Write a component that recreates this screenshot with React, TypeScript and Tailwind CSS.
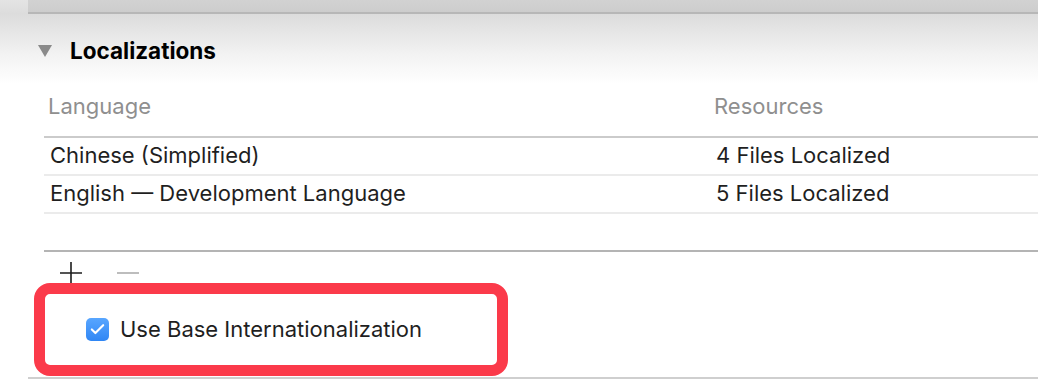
import { Check } from "lucide-react"

const ROWS = [
  { language: "Chinese (Simplified)", resources: "4 Files Localized" },
  { language: "English — Development Language", resources: "5 Files Localized" }
]

export default function App() {
  return (
    <div className="relative h-[386px] w-[1038px] overflow-hidden bg-white font-['Inter',sans-serif] text-[#1f1f1f]">
      {/* top shadow band */}
      <div className="flex h-[14px]">
        <div className="w-[28px] bg-gradient-to-b from-[#e4e4e4] to-[#dcdcdc]" />
        <div className="flex flex-1 flex-col">
          <div className="flex-1 bg-gradient-to-b from-[#d2d2d2] to-[#cdcdcd]" />
          <div className="h-[2px] bg-[#b7b7b7]" />
        </div>
      </div>

      <div className="flex h-[74px] items-center bg-[linear-gradient(to_bottom,#dcdcdc,#f2f2f2_40px,#ffffff_70px)] pl-[38px]">
        <svg width="14" height="12" viewBox="0 0 14 12" className="shrink-0">
          <polygon points="0,0 14,0 7,12" fill="#8a8a8a" />
        </svg>
        <span className="ml-[18px] text-[22.5px] font-bold leading-none text-black">
          Localizations
        </span>
      </div>

      <div className="ml-[44px]">
        <div className="flex h-[50px] border-b-2 border-[#cbcbcb] pt-[6px] text-[22px] leading-[24px] text-[#8f8f8f]">
          <div className="w-[670px] pl-[4px]">Language</div>
          <div>Resources</div>
        </div>
        {ROWS.map((row) => (
          <div
            key={row.language}
            className="flex h-[38px] items-center border-b-2 border-[#ebebeb] pb-[2px] text-[22px] leading-none"
          >
            <div className="w-[672px] pl-[6px]">{row.language}</div>
            <div>{row.resources}</div>
          </div>
        ))}
        <div className="mt-[36px] h-[2px] bg-[#b4b4b4]" />
      </div>

      <div className="flex h-[31px] items-center pl-[60px] pt-[10px]">
        <svg width="22" height="22" viewBox="0 0 22 22">
          <path d="M11 0V22M0 11H22" stroke="#1c1c1c" strokeWidth="1.6" />
        </svg>
        <svg width="22" height="22" viewBox="0 0 22 22" className="ml-[35px]">
          <path d="M0 11H22" stroke="#bdbdbd" strokeWidth="2" />
        </svg>
      </div>

      <div className="flex h-[94px] items-center pb-[2px] pl-[86px]">
        <div className="flex h-[23px] w-[23px] items-center justify-center rounded-[5px] bg-gradient-to-b from-[#58a6ff] to-[#2f86f4]">
          <Check size={17} strokeWidth={3} color="#ffffff" />
        </div>
        <span className="ml-[11px] text-[22px] leading-none">Use Base Internationalization</span>
      </div>
      <div className="ml-[28px] h-[2px] bg-[#cfcfcf]" />

      {/* highlight annotation */}
      <div className="absolute left-[34px] top-[283px] h-[93px] w-[474px] rounded-[16px] border-[11px] border-[#fb3a4a]" />
    </div>
  )
}
